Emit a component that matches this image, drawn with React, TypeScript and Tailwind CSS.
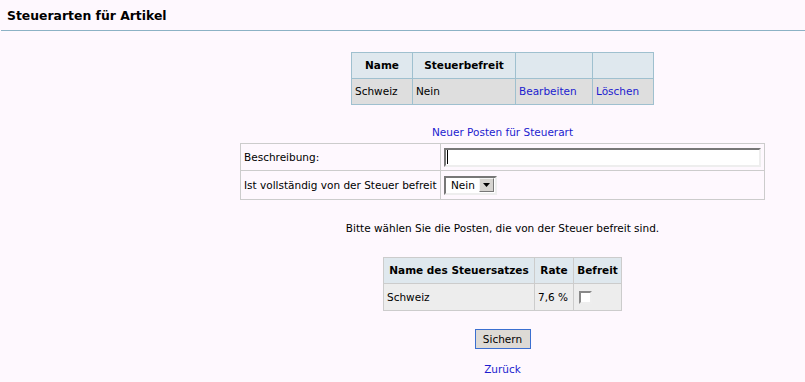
export default function App() {
  return (
    <div className="min-h-screen bg-[#fef8fe] font-['DejaVu_Sans',sans-serif] text-[10.5px] leading-[13px] text-black">
      {/* Page title */}
      <div className="h-[30px] pl-[7px] pt-[9px] text-[12.4px] font-bold leading-[14px]">Steuerarten für Artikel</div>
      <div className="ml-px h-px bg-[#8cb2c5]" />

      <div className="flex flex-col items-center pl-[200px] whitespace-nowrap">
        {/* Tax type list */}
        <table className="mt-[21px] border-collapse border border-[#9fc0cf]">
          <thead>
            <tr className="h-[26px] bg-[#dfe8ee]">
              <th className="w-[61px] border border-[#9fc0cf] px-[3px] font-bold">Name</th>
              <th className="w-[103px] border border-[#9fc0cf] px-[3px] font-bold">Steuerbefreit</th>
              <th className="w-[77px] border border-[#9fc0cf] px-[3px]"></th>
              <th className="w-[61px] border border-[#9fc0cf] px-[3px]"></th>
            </tr>
          </thead>
          <tbody>
            <tr className="h-[26px] bg-[#dedede]">
              <td className="border border-[#9fc0cf] px-[3px]">Schweiz</td>
              <td className="border border-[#9fc0cf] px-[3px]">Nein</td>
              <td className="border border-[#9fc0cf] px-[3px]">
                <a href="#" className="text-[#1c1ccf]">Bearbeiten</a>
              </td>
              <td className="border border-[#9fc0cf] px-[3px]">
                <a href="#" className="text-[#1c1ccf]">Löschen</a>
              </td>
            </tr>
          </tbody>
        </table>

        <a href="#" className="mt-[21px] text-[#1c1ccf]">Neuer Posten für Steuerart</a>

        {/* New entry form */}
        <table className="mt-[4px] w-[525px] border-collapse border border-[#cccccc]">
          <tbody>
            <tr className="h-[27px]">
              <td className="w-[200px] border border-[#cccccc] px-[3px]">Beschreibung:</td>
              <td className="border border-[#cccccc] px-[3px]">
                <div className="flex h-[19px] w-[317px] items-center border-2 border-t-[#777777] border-l-[#777777] border-r-[#eeeeee] border-b-[#eeeeee] bg-white pl-px">
                  <span className="h-[14px] w-px bg-black" />
                </div>
              </td>
            </tr>
            <tr className="h-[29px]">
              <td className="border border-[#cccccc] px-[3px]">Ist vollständig von der Steuer befreit</td>
              <td className="border border-[#cccccc] px-[3px]">
                <div className="flex h-[19px] w-[53px] items-center justify-between border-2 border-t-[#777777] border-l-[#777777] border-r-[#eeeeee] border-b-[#eeeeee] bg-white pl-[5px] pr-px">
                  <span>Nein</span>
                  <span className="flex h-[14px] w-[15px] items-center justify-center border border-t-[#f4f4f4] border-l-[#f4f4f4] border-r-[#777777] border-b-[#777777] bg-[#d6d4d0]">
                    <svg width="7" height="4" viewBox="0 0 7 4">
                      <path d="M0 0h7L3.5 4z" fill="#000" />
                    </svg>
                  </span>
                </div>
              </td>
            </tr>
          </tbody>
        </table>

        <p className="mt-[22px]">Bitte wählen Sie die Posten, die von der Steuer befreit sind.</p>

        {/* Exempt rates */}
        <table className="mt-[22px] w-[238px] table-fixed border-collapse border border-[#cccccc]">
          <thead>
            <tr className="h-[26px] bg-[#dfe8ee]">
              <th className="w-[151px] border border-[#cccccc] px-[3px] font-bold">Name des Steuersatzes</th>
              <th className="w-[39px] border border-[#cccccc] px-[3px] font-bold">Rate</th>
              <th className="w-[48px] border border-[#cccccc] px-[3px] font-bold">Befreit</th>
            </tr>
          </thead>
          <tbody>
            <tr className="h-[27px] bg-[#ededed]">
              <td className="border border-[#cccccc] px-[3px]">Schweiz</td>
              <td className="border border-[#cccccc] px-[3px]">7,6 %</td>
              <td className="border border-[#cccccc] px-[5px]">
                <div className="h-[13px] w-[13px] border-2 border-t-[#888888] border-l-[#888888] border-r-[#eeeeee] border-b-[#eeeeee] bg-white" />
              </td>
            </tr>
          </tbody>
        </table>

        <button className="mt-[18px] h-[20px] w-[56px] border border-[#3b6fd0] bg-[#dddad5] text-[10.5px] leading-[13px]">
          Sichern
        </button>

        <a href="#" className="mt-[14px] text-[#1c1ccf]">Zurück</a>
      </div>
    </div>
  );
}
